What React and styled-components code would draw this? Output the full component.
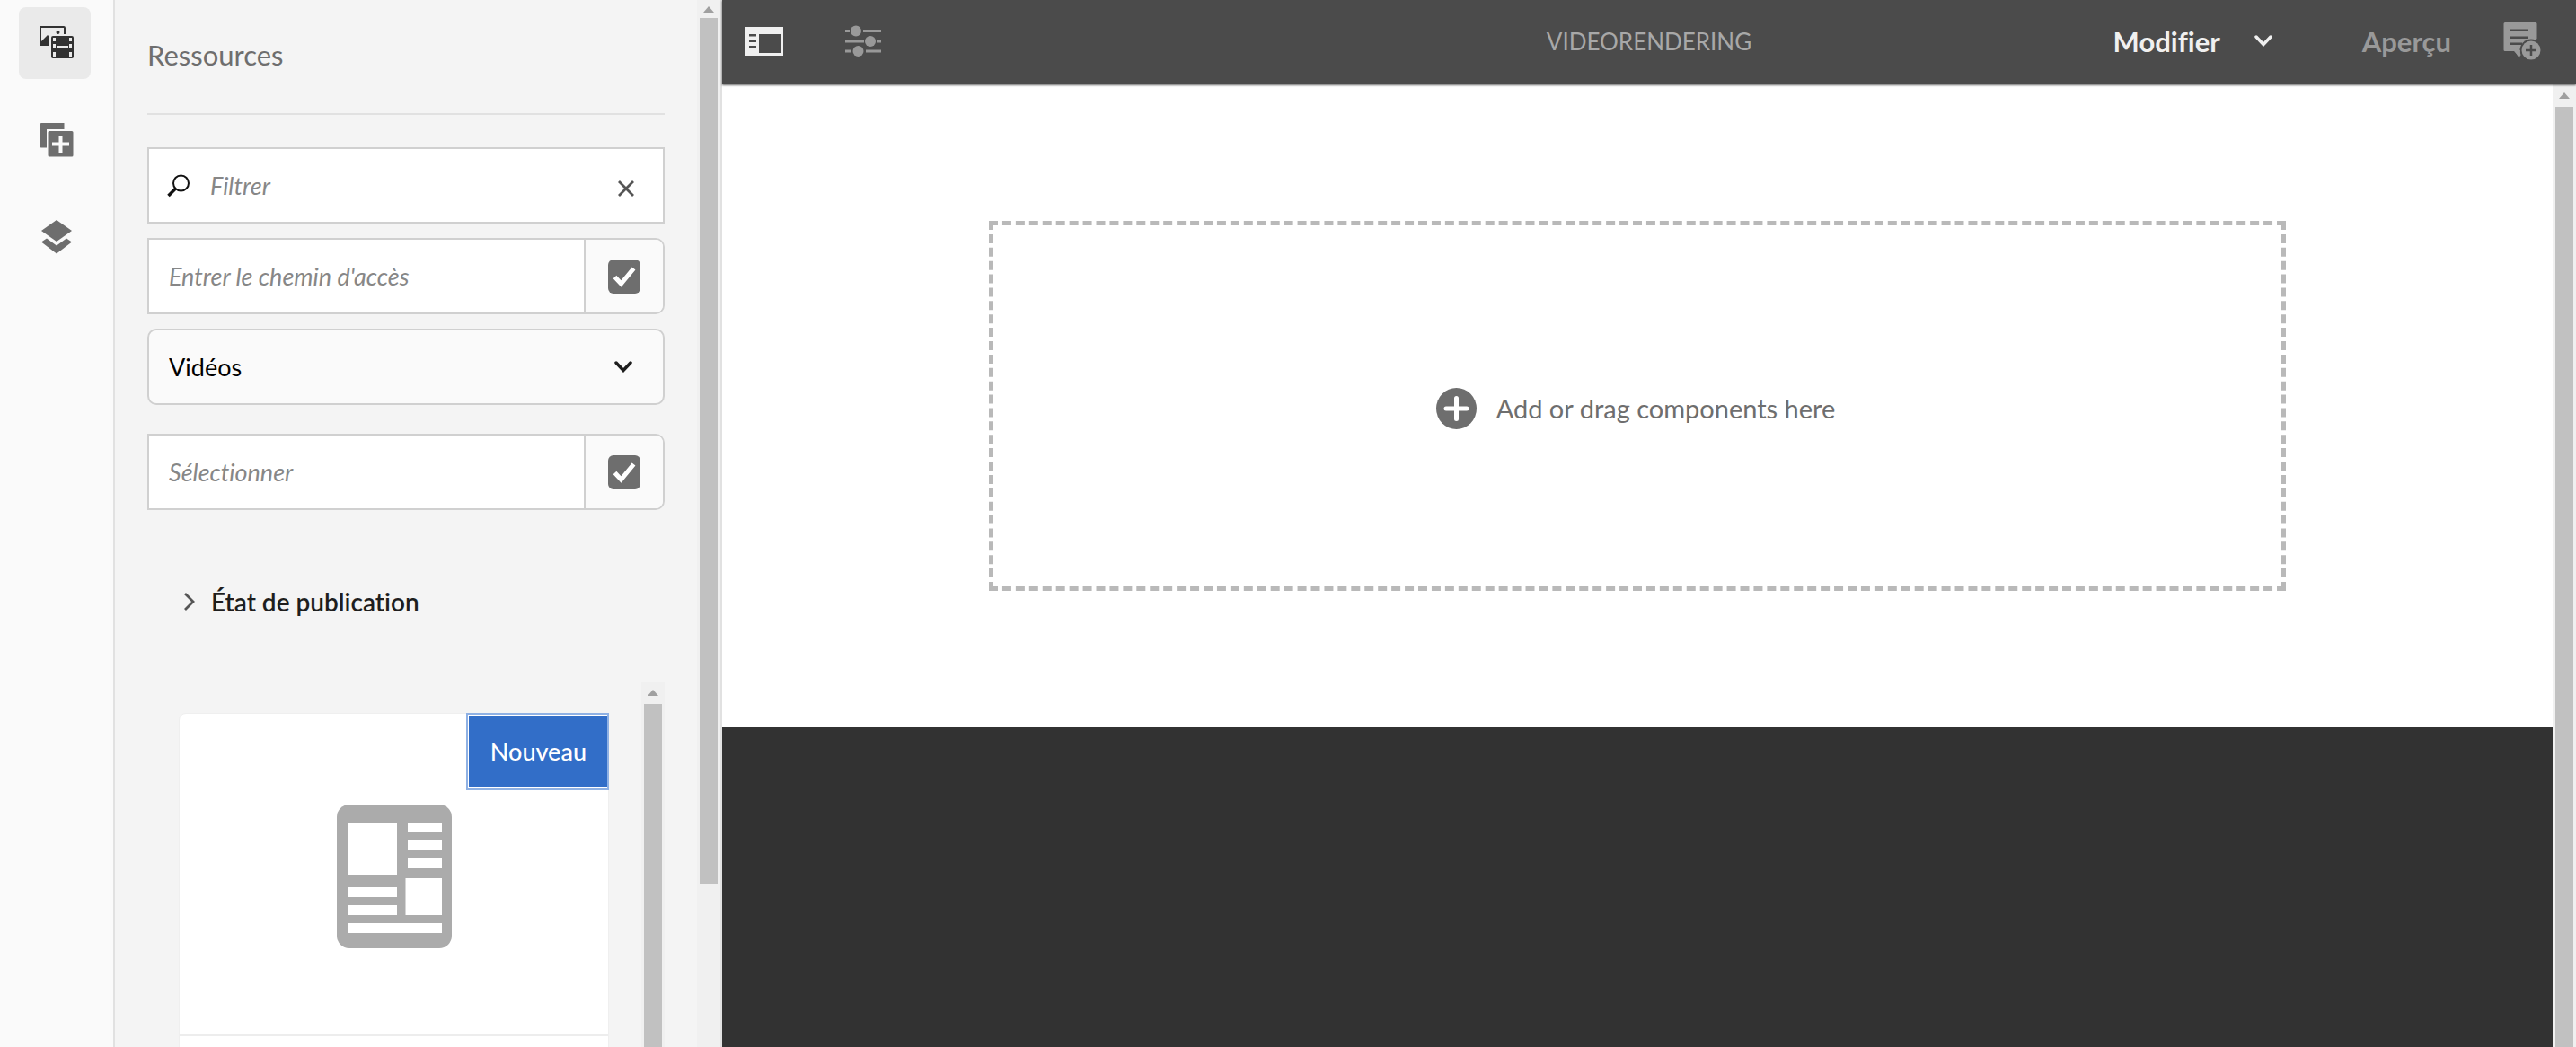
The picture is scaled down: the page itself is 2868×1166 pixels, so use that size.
import React, { useState } from "react";
import styled, { createGlobalStyle, css } from "styled-components";

const color = {
  rail: "#fafafa",
  panel: "#f4f4f4",
  field: "#ffffff",
  border: "#d0d0d0",
  line: "#e1e1e1",
  icon: "#6e6e6e",
  ink: "#1e1e1e",
  muted: "#6e6e6e",
  placeholder: "#878787",
  bar: "#4b4b4b",
  barMuted: "#999999",
  accent: "#326ec8",
};

const GlobalStyle = createGlobalStyle`
  *, *::before, *::after { box-sizing: border-box; }
  html, body { margin: 0; }
  body {
    background: ${color.panel};
    color: ${color.ink};
    font-family: Lato, "Noto Sans", sans-serif;
    font-size: 27px;
    line-height: 32px;
    font-variant-ligatures: none;
    overflow: hidden;
  }
  button, input, select { font: inherit; color: inherit; margin: 0; }
  svg { display: block; flex: none; }
`;

const bareButton = css`
  display: flex;
  align-items: center;
  justify-content: center;
  padding: 0;
  border: 0;
  background: none;
  cursor: pointer;
`;

const Shell = styled.div`
  display: flex;
  height: 100vh;
`;

const Rail = styled.nav`
  flex: none;
  display: flex;
  flex-direction: column;
  align-items: center;
  gap: 28px;
  width: 128px;
  padding: 8px 4px 8px 0;
  background: ${color.rail};
  border-right: 2px solid ${color.line};
`;

const RailButton = styled.button`
  ${bareButton}
  width: 80px;
  height: 80px;
  padding-left: 4px;
  border-radius: 8px;
  background: ${(p) => (p.$active ? "#eaeaea" : "transparent")};
  color: ${(p) => (p.$active ? "#323232" : color.icon)};
`;

const Panel = styled.aside`
  flex: none;
  display: flex;
  width: 676px;
  border-right: 2px solid ${color.line};
`;

const PanelBody = styled.div`
  flex: 1;
  display: flex;
  flex-direction: column;
  min-width: 0;
  padding: 0 36px;
`;

const PanelTitle = styled.h1`
  flex: none;
  margin: 0 0 36px;
  padding: 41px 0 45px;
  border-bottom: 2px solid ${color.line};
  color: ${color.muted};
  font-size: 31px;
  font-weight: 400;
  line-height: 40px;
`;

const Filters = styled.form`
  display: flex;
  flex-direction: column;
  gap: 16px;
`;

const FilterGroup = styled.div`
  display: flex;
  flex-direction: column;
  gap: 32px;
`;

const Field = styled.div`
  display: flex;
  align-items: center;
  height: 85px;
  border: 2px solid ${color.border};
  border-radius: ${(p) => (p.$split ? "0 10px 10px 0" : 0)};
  background: ${color.field};
  overflow: hidden;
`;

const FieldIcon = styled.label`
  padding-left: 20px;
`;

const TextInput = styled.input`
  flex: 1;
  min-width: 0;
  height: 100%;
  padding: 0 22px;
  border: 0;
  outline: 0;
  background: transparent;
  &::placeholder {
    color: ${color.placeholder};
    font-style: italic;
    opacity: 1;
  }
`;

const ClearButton = styled.button`
  ${bareButton}
  width: 82px;
  height: 100%;
  padding-top: 6px;
`;

const CheckLabel = styled.label`
  display: grid;
  place-items: center;
  width: 88px;
  height: 100%;
  border-left: 2px solid ${color.border};
  background: ${color.rail};
  cursor: pointer;
  > * { grid-area: 1 / 1; }
`;

const CheckBox = styled.input`
  appearance: none;
  width: 36px;
  height: 38px;
  border-radius: 6px;
  background: ${color.icon};
`;

const SelectBox = styled.div`
  display: grid;
  align-items: center;
  height: 85px;
  > * { grid-area: 1 / 1; }
  > svg { justify-self: end; margin-right: 36px; pointer-events: none; }
`;

const Select = styled.select`
  appearance: none;
  width: 100%;
  height: 100%;
  padding: 0 22px;
  border: 2px solid ${color.border};
  border-radius: 10px;
  background: ${color.rail};
  color: #000;
`;

const Disclosure = styled.button`
  ${bareButton}
  flex: none;
  justify-content: flex-start;
  gap: 18px;
  margin: 62px 0 49px;
  padding: 24px 40px;
  font-size: 28px;
  font-weight: 600;
`;

const Results = styled.section`
  flex: 1;
  display: flex;
  min-height: 0;
`;

const ResultList = styled.div`
  flex: 1;
  min-width: 0;
  padding: 35px 36px 0 35px;
  overflow: hidden;
`;

const Card = styled.a`
  display: block;
  height: 440px;
  border: 1px solid #efefef;
  border-radius: 8px;
  background: #fff;
  text-decoration: none;
`;

const CardPreview = styled.div`
  position: relative;
  display: flex;
  align-items: center;
  justify-content: center;
  height: 359px;
  padding-top: 4px;
  border-bottom: 2px solid #ededed;
`;

const NewBadge = styled.span`
  position: absolute;
  top: 0;
  right: 0;
  padding: 25px 24px;
  border: 2px solid #fff;
  border-right: 0;
  outline: 2px solid #8fb1e4;
  outline-offset: -1px;
  background: ${color.accent};
  color: #fff;
  font-weight: 500;
  line-height: 30px;
`;

const Track = styled.div`
  flex: none;
  display: flex;
  flex-direction: column;
  align-items: center;
  width: 26px;
  padding: 0 3px;
  background: #f0f0f0;
`;

const TrackArrow = styled.button`
  ${bareButton}
  flex: none;
  width: 100%;
  height: ${(p) => p.$height}px;
`;

const Thumb = styled.div`
  flex: ${(p) => p.$share} 0 0;
  width: 100%;
  background: #c1c1c1;
`;

const TrackRest = styled.div`
  flex: ${(p) => p.$share} 0 0;
`;

const Editor = styled.main`
  flex: 1;
  display: flex;
  flex-direction: column;
  min-width: 0;
`;

const Toolbar = styled.header`
  flex: none;
  display: grid;
  grid-template-columns: 1fr auto 1fr;
  align-items: center;
  height: 94px;
  padding: 0 26px 3px;
  background: ${color.bar};
  color: ${color.barMuted};
  box-shadow: 0 1px 2px rgba(0, 0, 0, 0.6);
  z-index: 1;
`;

const ToolGroup = styled.div`
  display: flex;
  align-items: center;
  justify-content: ${(p) => (p.$end ? "flex-end" : "flex-start")};
  padding-right: ${(p) => (p.$end ? "13px" : 0)};
  gap: ${(p) => p.$gap}px;
`;

const ToolButton = styled.button`
  ${bareButton}
  gap: 38px;
  height: 64px;
  color: ${(p) => (p.$bright ? "#f0f0f0" : color.barMuted)};
  font-size: 31px;
  font-weight: 700;
`;

const PageTitle = styled.h2`
  margin: 0;
  color: #a8a8a8;
  font-size: 26px;
  font-weight: 400;
`;

const Canvas = styled.div`
  flex: 1;
  display: flex;
  min-height: 0;
`;

const Page = styled.div`
  flex: 1;
  display: flex;
  flex-direction: column;
  min-width: 0;
  background: #323232;
`;

const PageContent = styled.div`
  display: flex;
  justify-content: center;
  padding: 152px 32px;
  background: #fff;
`;

const DropZone = styled.button`
  ${bareButton}
  gap: 22px;
  width: 100%;
  max-width: 1444px;
  height: 412px;
  padding: 6px 4px 0 0;
  border: 5px dashed #b9b9b9;
  color: ${color.muted};
  font-size: 29px;
`;

const AssetsIcon = () => (
  <svg width="40" height="40" viewBox="0 0 40 40" fill="currentColor">
    <path fillRule="evenodd" d="M2 1h26a2 2 0 0 1 2 2v7h-2V3H3v15l7-7 1 1v11H2a1.500 1.500 0 0 1-1-1.500V2.500A1.500 1.500 0 0 1 2 1z" />
    <circle cx="21.500" cy="8" r="2" />
    <path fillRule="evenodd" d="M16 12h21a2 2 0 0 1 2 2v21a2 2 0 0 1-2 2H16a2 2 0 0 1-2-2V14a2 2 0 0 1 2-2zM16 14v4h3v-4zM34 14v4h3v-4zM16 21v5h3v-5zM34 21v5h3v-5zM16 30v5h3v-5zM34 30v5h3v-5zM20 23v3h13v-3z" />
  </svg>
);

const ComponentsIcon = () => (
  <svg width="38" height="38" viewBox="0 0 38 38" fill="currentColor">
    <path d="M2 0h25.500v7H8v20.500H2A1.500 1.500 0 0 1 .5 26V1.500A1.500 1.500 0 0 1 2 0z" />
    <path fillRule="evenodd" d="M11 9h25a1.500 1.500 0 0 1 1.500 1.500V36a1.500 1.500 0 0 1-1.500 1.500H11A1.500 1.500 0 0 1 9.500 36V10.500A1.500 1.500 0 0 1 11 9zM21.500 14v7.500H14v4h7.500V33h4v-7.500H33v-4h-7.500V14z" />
  </svg>
);

const LayersIcon = () => (
  <svg width="36" height="38" viewBox="0 0 36 38" fill="currentColor">
    <path d="M18 0l17 12-17 12L1 12z" />
    <path d="M7 20.500l11 8 11-8 6 4L18 37.500 1 24.500z" />
  </svg>
);

const SearchIcon = () => (
  <svg width="26" height="26" viewBox="0 0 26 26" fill="none" stroke="#111">
    <circle cx="15.500" cy="10" r="8.500" strokeWidth="2" />
    <path d="M9.500 16l-8 8" strokeWidth="3.500" />
  </svg>
);

const CloseIcon = () => (
  <svg width="18" height="18" viewBox="0 0 18 18" fill="none" stroke="#555" strokeWidth="2.800">
    <path d="M1 1l16 16M17 1L1 17" />
  </svg>
);

const CheckIcon = () => (
  <svg width="26" height="24" viewBox="0 0 26 24" fill="none" stroke="#fff" strokeWidth="5" pointerEvents="none">
    <path d="M2.500 12.500l7 7.500L23.500 3" />
  </svg>
);

const ChevronDown = () => (
  <svg width="20" height="13" viewBox="0 0 20 13" fill="none" stroke="currentColor" strokeWidth="3.500" strokeLinecap="round">
    <path d="M2 2l8 8.500L18 2" />
  </svg>
);

const ChevronRight = () => (
  <svg width="13" height="20" viewBox="0 0 13 20" fill="none" stroke="#555" strokeWidth="2.800">
    <path d="M2 1l9 9-9 9" />
  </svg>
);

const ArticleIcon = () => (
  <svg width="128" height="160" viewBox="0 0 128 160">
    <rect width="128" height="160" rx="14" fill="#ababab" />
    <path fill="#fff" d="M12 20h55v58H12zM79 20h38v11H79zM79 40h38v11H79zM79 60h38v11H79zM12 92h55v11H12zM12 112h55v11H12zM76.500 82H117v41H76.500zM12 132h105v11H12z" />
  </svg>
);

const ArrowUp = () => (
  <svg width="12" height="7" viewBox="0 0 12 7" fill="#a0a0a0">
    <path d="M6 0l6 7H0z" />
  </svg>
);

const SidePanelIcon = () => (
  <svg width="42" height="32" viewBox="0 0 42 32">
    <rect width="42" height="32" fill="#f0f0f0" />
    <path fill="#4b4b4b" d="M15 8h24v21H15zM4 8h8v2.500H4zM4 14.500h8V17H4zM4 21h8v2.500H4z" />
  </svg>
);

const SlidersIcon = () => (
  <svg width="42" height="36" viewBox="0 0 42 36" fill="currentColor">
    <path d="M1 5h5v3H1zM21 5h20v3H21zM1 16.500h21v3H1zM36 16.500h5v3h-5zM1 27.500h7v3H1zM24 27.500h17v3H24z" />
    <circle cx="13" cy="6.500" r="6" />
    <circle cx="29" cy="18" r="6" />
    <circle cx="15.500" cy="29" r="6" />
  </svg>
);

const AnnotateIcon = () => (
  <svg width="42" height="42" viewBox="0 0 42 42">
    <path fill="currentColor" d="M2 0h34a1.500 1.500 0 0 1 1.500 1.500V18L18 38l-6-6H2a1.500 1.500 0 0 1-1.500-1.500v-29A1.500 1.500 0 0 1 2 0z" />
    <path fill="#4b4b4b" d="M8 7.500h20V10H8zM8 15.500h20V18H8zM8 22.500h13V25H8z" />
    <circle cx="31" cy="31" r="12.500" fill="#4b4b4b" />
    <path fill="currentColor" d="M12 31h7l-1 9z" />
    <circle cx="31" cy="31" r="10.500" fill="currentColor" />
    <path stroke="#4b4b4b" strokeWidth="2.500" d="M31 25v12M25 31h12" />
  </svg>
);

const AddIcon = () => (
  <svg width="45" height="46" viewBox="0 0 45 46">
    <ellipse cx="22.500" cy="23" rx="22.500" ry="23" fill={color.icon} />
    <path stroke="#fff" strokeWidth="5" strokeLinecap="round" d="M22.500 11.500v23M11 23h23" />
  </svg>
);

const railItems = [
  { id: "assets", label: "Ressources", Icon: AssetsIcon },
  { id: "components", label: "Composants", Icon: ComponentsIcon },
  { id: "tree", label: "Arborescence", Icon: LayersIcon },
];

function ScrollTrack({ arrow, thumb, rest = 0 }) {
  return (
    <Track>
      <TrackArrow type="button" tabIndex={-1} aria-label="Défiler vers le haut" $height={arrow}>
        <ArrowUp />
      </TrackArrow>
      <Thumb $share={thumb} />
      <TrackRest $share={rest} />
    </Track>
  );
}

function PickerField({ id, placeholder }) {
  return (
    <Field $split>
      <TextInput id={id} aria-label={placeholder} placeholder={placeholder} />
      <CheckLabel>
        <CheckBox type="checkbox" defaultChecked aria-label={placeholder} />
        <CheckIcon />
      </CheckLabel>
    </Field>
  );
}

export default function App() {
  const [active, setActive] = useState("assets");
  const [filter, setFilter] = useState("");

  return (
    <>
      <GlobalStyle />
      <Shell>
        <Rail>
          {railItems.map(({ id, label, Icon }) => (
            <RailButton key={id} type="button" aria-label={label} $active={active === id} onClick={() => setActive(id)}>
              <Icon />
            </RailButton>
          ))}
        </Rail>

        <Panel>
          <PanelBody>
            <PanelTitle>Ressources</PanelTitle>
            <Filters onSubmit={(e) => e.preventDefault()}>
              <Field>
                <FieldIcon htmlFor="filter" aria-label="Filtrer">
                  <SearchIcon />
                </FieldIcon>
                <TextInput id="filter" placeholder="Filtrer" value={filter} onChange={(e) => setFilter(e.target.value)} />
                <ClearButton type="button" aria-label="Effacer" onClick={() => setFilter("")}>
                  <CloseIcon />
                </ClearButton>
              </Field>
              <PickerField id="path" placeholder="Entrer le chemin d'accès" />
              <FilterGroup>
                <SelectBox>
                  <Select aria-label="Type de ressource" defaultValue="videos">
                    <option value="videos">Vidéos</option>
                  </Select>
                  <ChevronDown />
                </SelectBox>
                <PickerField id="tags" placeholder="Sélectionner" />
              </FilterGroup>
            </Filters>
            <Disclosure type="button" aria-expanded="false">
              <ChevronRight />
              État de publication
            </Disclosure>
            <Results>
              <ResultList>
                <Card href="#asset">
                  <CardPreview>
                    <ArticleIcon />
                    <NewBadge>Nouveau</NewBadge>
                  </CardPreview>
                </Card>
              </ResultList>
              <ScrollTrack arrow={25} thumb={1} />
            </Results>
          </PanelBody>
          <ScrollTrack arrow={20} thumb={965} rest={181} />
        </Panel>

        <Editor>
          <Toolbar>
            <ToolGroup $gap={68}>
              <ToolButton type="button" aria-label="Panneau latéral">
                <SidePanelIcon />
              </ToolButton>
              <ToolButton type="button" aria-label="Informations sur la page">
                <SlidersIcon />
              </ToolButton>
            </ToolGroup>
            <PageTitle>VIDEORENDERING</PageTitle>
            <ToolGroup $end $gap={58}>
              <ToolGroup $gap={100}>
                <ToolButton type="button" $bright>
                  Modifier
                  <ChevronDown />
                </ToolButton>
                <ToolButton type="button">Aperçu</ToolButton>
              </ToolGroup>
              <ToolButton type="button" aria-label="Annoter">
                <AnnotateIcon />
              </ToolButton>
            </ToolGroup>
          </Toolbar>
          <Canvas>
            <Page>
              <PageContent>
                <DropZone type="button">
                  <AddIcon />
                  Add or drag components here
                </DropZone>
              </PageContent>
            </Page>
            <ScrollTrack arrow={25} thumb={1} />
          </Canvas>
        </Editor>
      </Shell>
    </>
  );
}
